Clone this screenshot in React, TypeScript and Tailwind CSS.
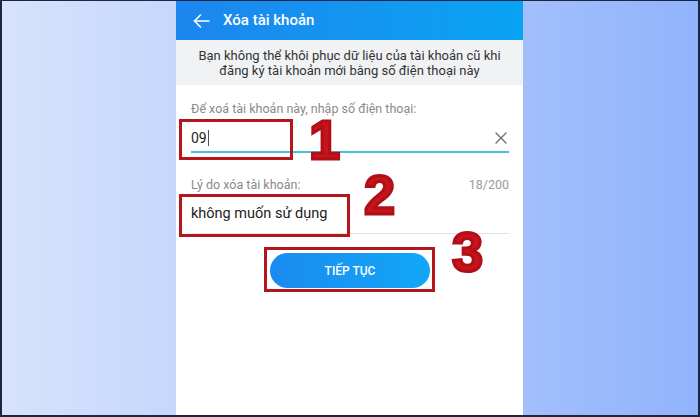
const roboto = { fontFamily: 'Roboto, "Noto Sans", sans-serif' }

function BackArrow() {
	return (
		<svg width="17" height="14" viewBox="0 0 17 14" fill="none" stroke="white" strokeWidth="1.6" strokeLinecap="round" strokeLinejoin="round">
			<path d="M16 7H1.5" />
			<path d="M7.5 1L1.5 7l6 6" />
		</svg>
	)
}

function ClearIcon() {
	return (
		<svg width="12" height="12" viewBox="0 0 12 12" fill="none" stroke="#6f6f6f" strokeWidth="1.4" strokeLinecap="round">
			<path d="M1 1l10 10M11 1L1 11" />
		</svg>
	)
}

function Step({ n, className }: { n: string; className: string }) {
	return (
		<div
			className={`absolute text-[56px] leading-[40px] font-bold text-[#c8131b] [-webkit-text-stroke:3px_#b00f17] ${className}`}
			style={{ fontFamily: '"Liberation Sans", Arial, sans-serif' }}
		>
			{n}
		</div>
	)
}

export default function App() {
	return (
		<div className="relative w-[700px] h-[417px] flex border-[#1c2546] border-t border-l-2 border-r-2 border-b-2 bg-linear-to-r from-[#d7e3fb] to-[#91b3fb] overflow-hidden" style={roboto}>
			<div className="w-[174px]" />

			{/* phone screenshot */}
			<div className="w-[347px] bg-white flex flex-col">
				<div className="h-[39px] flex items-center gap-[13px] pl-[17px] bg-linear-to-r from-[#1c86ee] to-[#08a3f2]">
					<BackArrow />
					<span className="text-[15px] font-medium text-white">Xóa tài khoản</span>
				</div>
				<div className="h-[45px] bg-[#f1f2f4] flex flex-col items-center justify-center text-[13px] leading-[15px] text-[#333]">
					<span>Bạn không thể khôi phục dữ liệu của tài khoản cũ khi</span>
					<span>đăng ký tài khoản mới bằng số điện thoại này</span>
				</div>

				<div className="px-[15px] pr-[14px] flex flex-col">
					<div className="mt-[16px] text-[12.5px] leading-[16px] text-[#8a8a8a]">Để xoá tài khoản này, nhập số điện thoại:</div>
					<div className="mt-[8px] h-[26px] flex items-center justify-between">
						<div className="flex items-center text-[14px] text-[#222]">
							09
							<span className="ml-[1px] w-px h-[16px] bg-[#555]" />
						</div>
						<div className="mr-[2px]">
							<ClearIcon />
						</div>
					</div>
					<div className="h-[2px] bg-[#45c2d8]" />

					<div className="mt-[24px] flex justify-between text-[12.5px] leading-[16px]">
						<span className="text-[#8a8a8a]">Lý do xóa tài khoản:</span>
						<span className="text-[#9a9a9a]">18/200</span>
					</div>
					<div className="mt-[11px] text-[14.5px] leading-[20px] text-[#222]">không muốn sử dụng</div>
					<div className="mt-[9px] h-px bg-[#e4e4e4]" />

					<div className="mt-[19px] flex justify-center">
						<div className="w-[160px] h-[35px] rounded-full bg-linear-to-r from-[#1a8bef] to-[#13a7f6] flex items-center justify-center text-[12px] font-medium text-white">
							TIẾP TỤC
						</div>
					</div>
				</div>
			</div>

			<div className="flex-1" />

			{/* annotation boxes */}
			<div className="absolute left-[177px] top-[118px] w-[114px] h-[41px] border-[3px] border-[#b4161c]" />
			<div className="absolute left-[177px] top-[193px] w-[171px] h-[43px] border-[3px] border-[#b4161c]" />
			<div className="absolute left-[262px] top-[246px] w-[171px] h-[45px] border-[3px] border-[#b4161c]" />

			<Step n="1" className="left-[307px] top-[119px]" />
			<Step n="2" className="left-[362px] top-[174px]" />
			<Step n="3" className="left-[450px] top-[231px]" />
		</div>
	)
}
